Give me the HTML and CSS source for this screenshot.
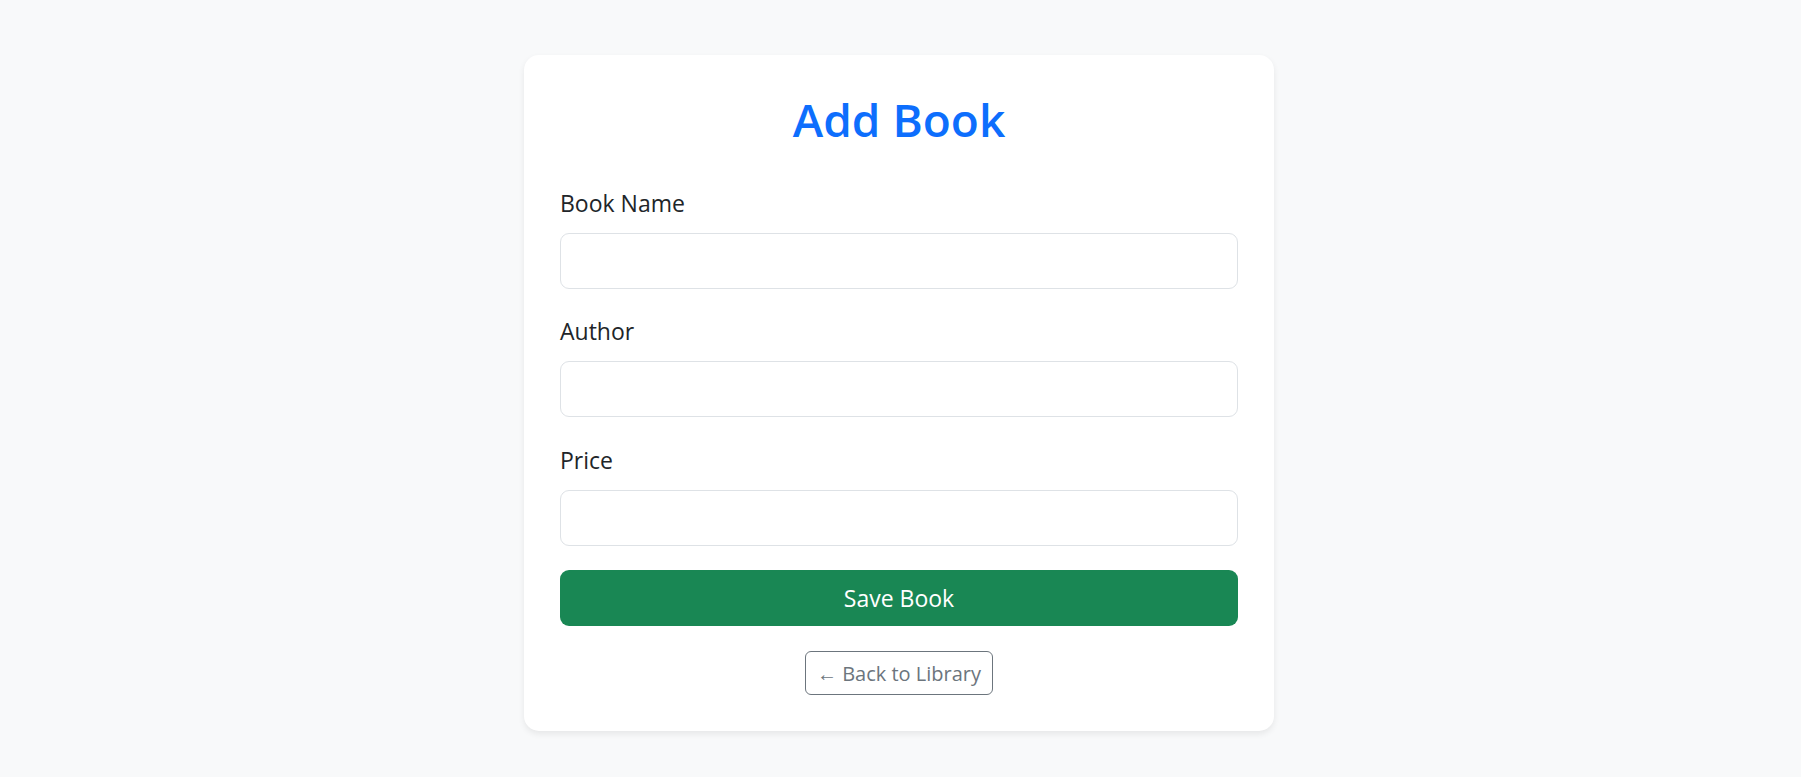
FILE: index.html
```html
<!DOCTYPE html>
<html lang="en">
<head>
<meta charset="utf-8">
<title>Add Book</title>
<link rel="stylesheet" href="styles.css">
</head>
<body>
<main class="page">
  <section class="card">
    <h2 class="title">Add Book</h2>
    <form class="form">
      <div class="field">
        <label class="label" for="name">Book Name</label>
        <input class="input" id="name" type="text">
      </div>
      <div class="field">
        <label class="label" for="author">Author</label>
        <input class="input" id="author" type="text">
      </div>
      <div class="field">
        <label class="label" for="price">Price</label>
        <input class="input" id="price" type="text">
      </div>
      <button class="save" type="button">Save Book</button>
    </form>
    <div class="back-row">
      <a class="back" href="#">← Back to Library</a>
    </div>
  </section>
</main>
</body>
</html>
```
FILE: styles.css
```css
* { box-sizing: border-box; }
html, body { margin: 0; padding: 0; }
body {
  background: #f8f9fa;
  font-family: "Open Sans", "Noto Sans", sans-serif;
  color: #212529;
  min-height: 777px;
}
.page {
  display: flex;
  justify-content: center;
  padding-top: 55px;
  padding-right: 3px;
}
.card {
  width: 750px;
  background: #fff;
  border-radius: 15px;
  box-shadow: 0 3px 6px rgba(0,0,0,0.075);
  padding: 36px;
}
.title {
  margin: 0 0 36px;
  text-align: center;
  color: #0d6efd;
  font-size: 46px;
  font-weight: 600;
  line-height: 57.6px;
}
.form { display: flex; flex-direction: column; }
.field { display: flex; flex-direction: column; margin-bottom: 24.5px; }
.label {
  font-size: 23px;
  line-height: 36px;
  margin-bottom: 12px;
}
.input {
  height: 56px;
  border: 1.5px solid #dee2e6;
  border-radius: 9px;
  background: #fff;
  font: inherit;
}
.save {
  height: 56px;
  border: 0;
  border-radius: 9px;
  background: #198754;
  color: #fff;
  font-family: inherit;
  font-size: 23px;
}
.back-row { display: flex; justify-content: center; margin-top: 25px; }
.back {
  display: inline-flex;
  align-items: center;
  height: 44px;
  padding: 0 11px;
  border: 1.5px solid #6c757d;
  border-radius: 6px;
  color: #6c757d;
  text-decoration: none;
  font-size: 20px;
}
```
